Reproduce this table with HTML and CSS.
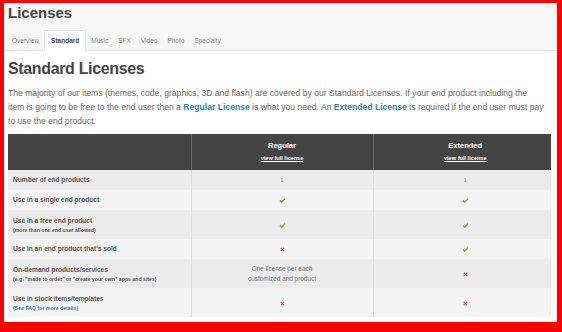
FILE: index.html
```html
<!DOCTYPE html>
<html lang="en">
<head>
  <meta charset="UTF-8">
  <title>Licenses</title>
  <link rel="stylesheet" href="styles.css">
</head>
<body>
  <div class="frame">
    <div class="page-header">
      <h1>Licenses</h1>
      <div class="tabs">
        <span class="tab">Overview</span>
        <span class="tab active">Standard</span>
        <span class="tab">Music</span>
        <span class="tab">SFX</span>
        <span class="tab">Video</span>
        <span class="tab">Photo</span>
        <span class="tab">Specialty</span>
      </div>
    </div>

    <h2>Standard Licenses</h2>
    <p class="intro">The majority of our items (themes, code, graphics, 3D and flash) are covered by our Standard Licenses. If your end product including the<br>item is going to be free to the end user then a <a href="#">Regular License</a> is what you need. An <a href="#">Extended License</a> is required if the end user must pay to use the end product.</p>

    <table class="licenses">
      <colgroup>
        <col class="c1"><col class="c2"><col class="c3">
      </colgroup>
      <thead>
        <tr>
          <th></th>
          <th><span class="lic">Regular</span><a href="#">view full license</a></th>
          <th class="ext"><span class="lic">Extended</span><a href="#">view full license</a></th>
        </tr>
      </thead>
      <tbody>
        <tr class="odd">
          <td class="label">Number of end products</td>
          <td class="num">1</td>
          <td class="num ext">1</td>
        </tr>
        <tr>
          <td class="label">Use in a single end product</td>
          <td><svg class="yes" viewBox="0 0 8 6"><path d="M1 3.2 3 5 7 1"/></svg></td>
          <td class="ext"><svg class="yes" viewBox="0 0 8 6"><path d="M1 3.2 3 5 7 1"/></svg></td>
        </tr>
        <tr class="odd tall">
          <td class="label">Use in a free end product<small>(more than one end user allowed)</small></td>
          <td><svg class="yes" viewBox="0 0 8 6"><path d="M1 3.2 3 5 7 1"/></svg></td>
          <td class="ext"><svg class="yes" viewBox="0 0 8 6"><path d="M1 3.2 3 5 7 1"/></svg></td>
        </tr>
        <tr>
          <td class="label">Use in an end product that's sold</td>
          <td><svg class="no" viewBox="0 0 6 6"><path d="M1 1 5 5M5 1 1 5"/></svg></td>
          <td class="ext"><svg class="yes" viewBox="0 0 8 6"><path d="M1 3.2 3 5 7 1"/></svg></td>
        </tr>
        <tr class="odd tall">
          <td class="label">On-demand products/services<small>(e.g. "made to order" or "create your own" apps and sites)</small></td>
          <td class="note">One license per each<br>customized and product</td>
          <td class="ext"><svg class="no" viewBox="0 0 6 6"><path d="M1 1 5 5M5 1 1 5"/></svg></td>
        </tr>
        <tr class="tall">
          <td class="label">Use in stock items/templates<small><a href="#">(See FAQ for more details)</a></small></td>
          <td><svg class="no" viewBox="0 0 6 6"><path d="M1 1 5 5M5 1 1 5"/></svg></td>
          <td class="ext"><svg class="no" viewBox="0 0 6 6"><path d="M1 1 5 5M5 1 1 5"/></svg></td>
        </tr>
      </tbody>
    </table>
  </div>
</body>
</html>
```

FILE: styles.css
```css
body {
  margin: 0;
  background: #ff0000;
  font-family: "Liberation Sans", Arial, sans-serif;
  color: #666;
}
.frame {
  margin: 3px 5px 0 4px;
  height: 319px;
  background: #ffffff;
  overflow: hidden;
}
.page-header {
  background: #f6f6f6;
  border-bottom: 1px solid #e3e7e7;
  padding-top: 2px;
}
h1 {
  margin: 0;
  padding-left: 4px;
  font-size: 15px;
  line-height: 15px;
  font-weight: 700;
  color: #444;
}
.tabs {
  display: flex;
  height: 20px;
  margin-top: 10px;
  padding-left: 3px;
}
.tab {
  height: 19px;
  padding: 0 4px;
  line-height: 19px;
  font-size: 6.5px;
  color: #888;
  border: 1px solid transparent;
  border-bottom: 0;
}
.tab.active {
  height: 20px;
  padding: 0 6px;
  background: #ffffff;
  border-color: #e3e7e7;
  color: #444;
  font-weight: 700;
}
h2 {
  margin: 8px 0 7px;
  padding-left: 4px;
  font-size: 16px;
  line-height: 20px;
  letter-spacing: -0.35px;
  color: #444;
}
.intro {
  margin: 0 0 6px;
  padding: 0 6px 0 4px;
  font-size: 8.6px;
  line-height: 14px;
  color: #666;
}
.intro a {
  color: #2386b6;
  font-weight: 700;
  text-decoration: none;
}
.licenses {
  margin-left: 4px;
  width: 543px;
  table-layout: fixed;
  border-collapse: collapse;
}
.c1 { width: 183px; }
.c2 { width: 182px; }
.c3 { width: 178px; }
.licenses th {
  height: 36px;
  padding: 0;
  background: #444;
  color: #fff;
  text-align: center;
  vertical-align: middle;
  border-left: 1px solid #666;
}
.licenses th:first-child {
  border-left: 0;
}
.licenses th .lic {
  display: block;
  font-size: 7.5px;
  line-height: 11px;
  margin-bottom: 2px;
}
.licenses th a {
  display: block;
  font-size: 5.6px;
  line-height: 11px;
  color: #fff;
}
.licenses td {
  height: 20px;
  padding: 0;
  background: #f4f4f4;
  text-align: center;
  vertical-align: middle;
  border-left: 1px solid #dedede;
}
.licenses tr.odd td {
  background: #ebebeb;
}
.licenses tr.tall td {
  height: 29px;
}
.licenses td.label {
  padding-left: 5px;
  border-left: 0;
  text-align: left;
  font-size: 6.6px;
  line-height: 10px;
  font-weight: 700;
  color: #555;
}
.label small {
  display: block;
  font-size: 5.2px;
  line-height: 8px;
  color: #555;
}
.label small a {
  color: #2a7db4;
  text-decoration: none;
}
.ext {
  padding-left: 6px !important;
}
.num {
  font-size: 6px;
  color: #999;
}
.note {
  font-size: 6.4px;
  line-height: 9.5px;
  color: #777;
}
svg {
  display: inline-block;
  vertical-align: middle;
}
.yes {
  width: 7px;
  height: 5px;
}
.yes path {
  fill: none;
  stroke: #7cb342;
  stroke-width: 1.8;
}
.no {
  width: 5px;
  height: 5px;
}
.no path {
  fill: none;
  stroke: #d9534f;
  stroke-width: 1.5;
}
```
